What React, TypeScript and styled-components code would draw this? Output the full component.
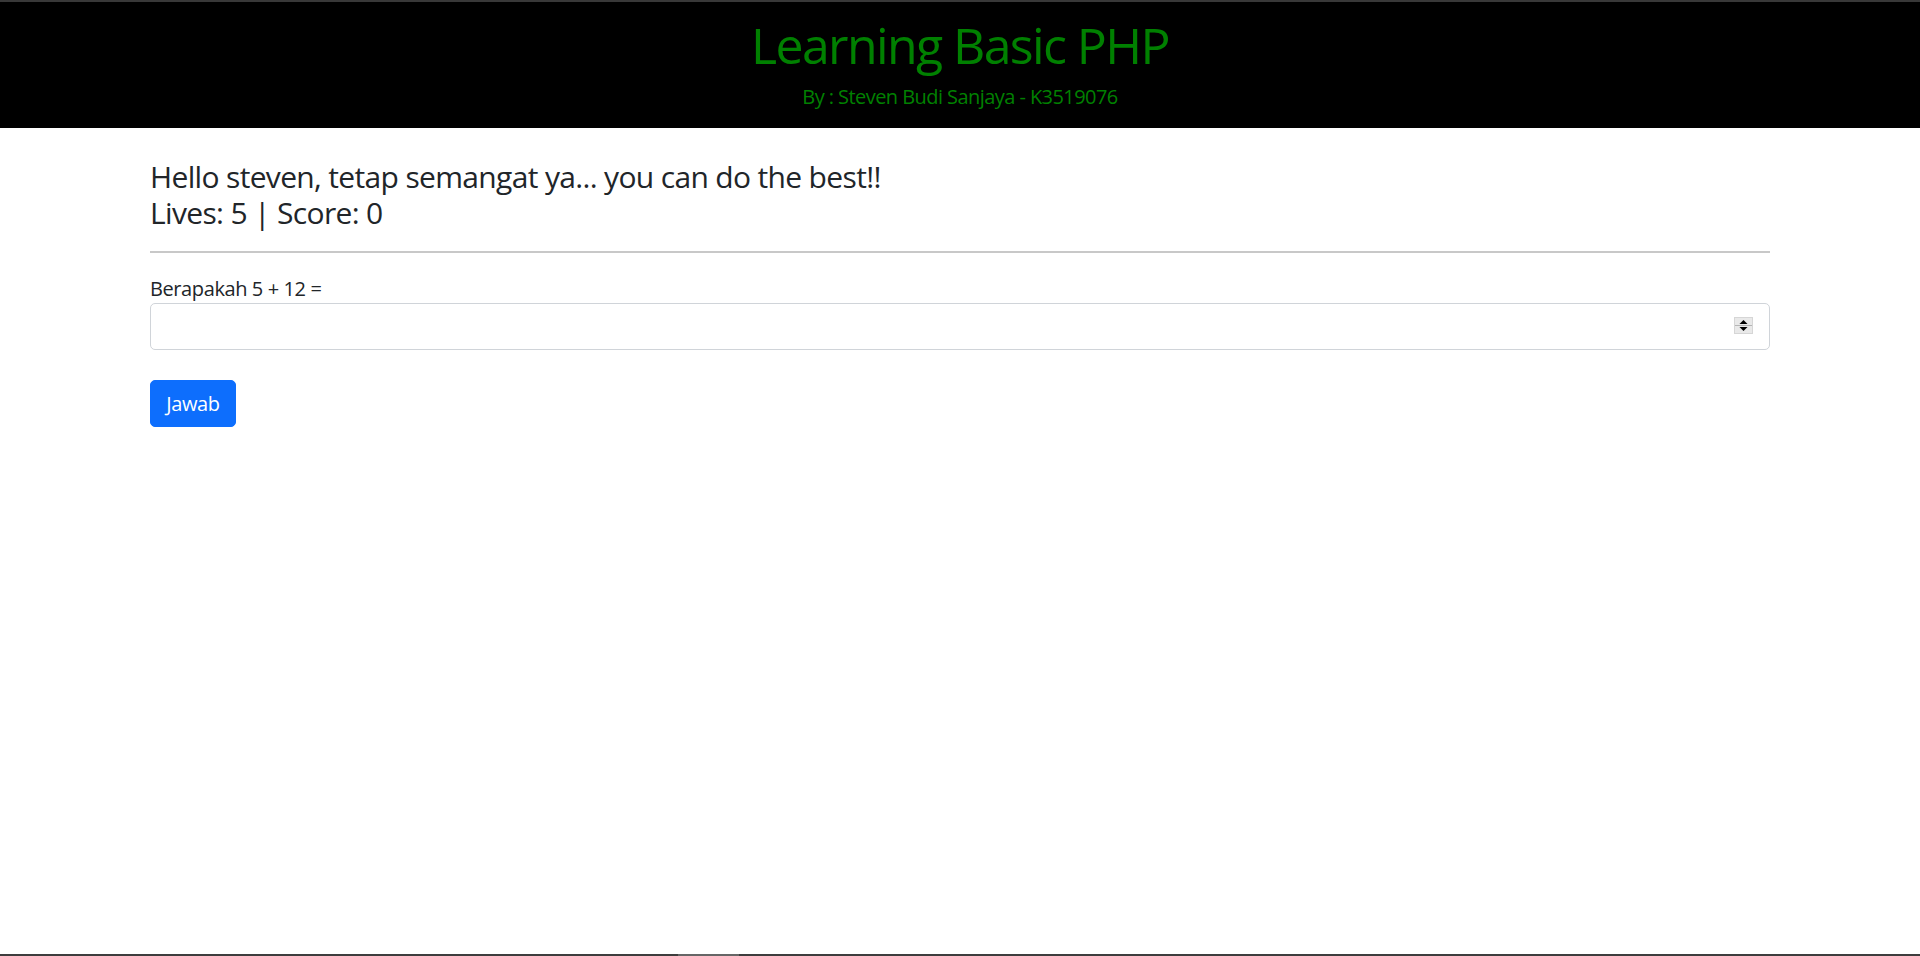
import styled, { createGlobalStyle } from 'styled-components';

const GlobalStyle = createGlobalStyle`
    html, body {
        margin: 0;
        padding: 0;
        background: #ffffff;
    }
    body {
        font-family: 'Open Sans', 'Noto Sans', sans-serif;
        color: #212529;
        letter-spacing: -0.025em;
    }
    * {
        box-sizing: border-box;
    }
`;

const Page = styled.div`
    min-height: 100vh;
    display: flex;
    flex-direction: column;
`;

const TopEdge = styled.div`
    height: 2px;
    background: #383838;
`;

const Header = styled.header`
    background: #000000;
    height: 126px;
    padding-top: 13px;
    text-align: center;
    color: #008000;
`;

const Title = styled.h1`
    margin: 0;
    font-size: 50px;
    font-weight: 400;
    line-height: 60px;
    letter-spacing: -0.032em;
`;

const Subtitle = styled.p`
    margin: 7px 0 0;
    font-size: 20px;
    line-height: 30px;
    letter-spacing: -0.028em;
`;

const Container = styled.main`
    width: 1620px;
    margin: 0 auto;
    padding-top: 31px;
`;

const Greeting = styled.h4`
    margin: 0;
    font-size: 30px;
    font-weight: 400;
    line-height: 36px;
    letter-spacing: -0.022em;
`;

const Divider = styled.hr`
    margin: 20px 0 0;
    border: 0;
    height: 2px;
    background: #c8c8c8;
`;

const Form = styled.form`
    display: flex;
    flex-direction: column;
    align-items: flex-start;
`;

const Label = styled.label`
    margin-top: 21px;
    font-size: 20px;
    line-height: 29px;
`;

const InputWrap = styled.div`
    position: relative;
    width: 100%;
`;

const NumberInput = styled.input`
    display: block;
    width: 100%;
    height: 47px;
    border: 1px solid #d0d4d9;
    border-radius: 5px;
    padding: 7px 15px;
    font-size: 20px;
    font-family: inherit;
    outline: none;
    -moz-appearance: textfield;
    &::-webkit-inner-spin-button,
    &::-webkit-outer-spin-button {
        -webkit-appearance: none;
        margin: 0;
    }
`;

const Spinner = styled.svg`
    position: absolute;
    right: 17px;
    top: 14px;
    width: 19px;
    height: 17px;
`;

const Button = styled.button`
    margin-top: 30px;
    background: #0d6efd;
    color: #ffffff;
    border: 1px solid #0d6efd;
    border-radius: 5px;
    height: 47px;
    width: 86px;
    padding: 0;
    font-family: inherit;
    font-size: 20px;
    line-height: 30px;
    letter-spacing: -0.02em;
    cursor: pointer;
`;

const Filler = styled.div`
    flex: 1;
`;

const BottomEdge = styled.div`
    height: 2px;
    display: flex;
    background: #3d3d3d;
`;

const BottomThumb = styled.div`
    margin-left: 678px;
    width: 61px;
    background: #666666;
`;

export default function App() {
    return (
        <Page>
            <GlobalStyle />
            <TopEdge />
            <Header>
                <Title>Learning Basic PHP</Title>
                <Subtitle>By : Steven Budi Sanjaya - K3519076</Subtitle>
            </Header>
            <Container>
                <Greeting>
                    Hello steven, tetap semangat ya... you can do the best!!
                    <br />
                    Lives: 5 | Score: 0
                </Greeting>
                <Divider />
                <Form onSubmit={(e) => e.preventDefault()}>
                    <Label htmlFor="jawaban">Berapakah 5 + 12 =</Label>
                    <InputWrap>
                        <NumberInput id="jawaban" type="number" />
                        <Spinner viewBox="0 0 19 17">
                            <rect x="0.5" y="0.5" width="18" height="16" fill="#e9e9e9" stroke="#d6d6d6" />
                            <line x1="1" y1="8.5" x2="18" y2="8.5" stroke="#b5b5b5" />
                            <polygon points="9.5,3 13.5,7 5.5,7" fill="#000000" />
                            <polygon points="5.5,10 13.5,10 9.5,14" fill="#000000" />
                        </Spinner>
                    </InputWrap>
                    <Button type="submit">Jawab</Button>
                </Form>
            </Container>
            <Filler />
            <BottomEdge>
                <BottomThumb />
            </BottomEdge>
        </Page>
    );
}
